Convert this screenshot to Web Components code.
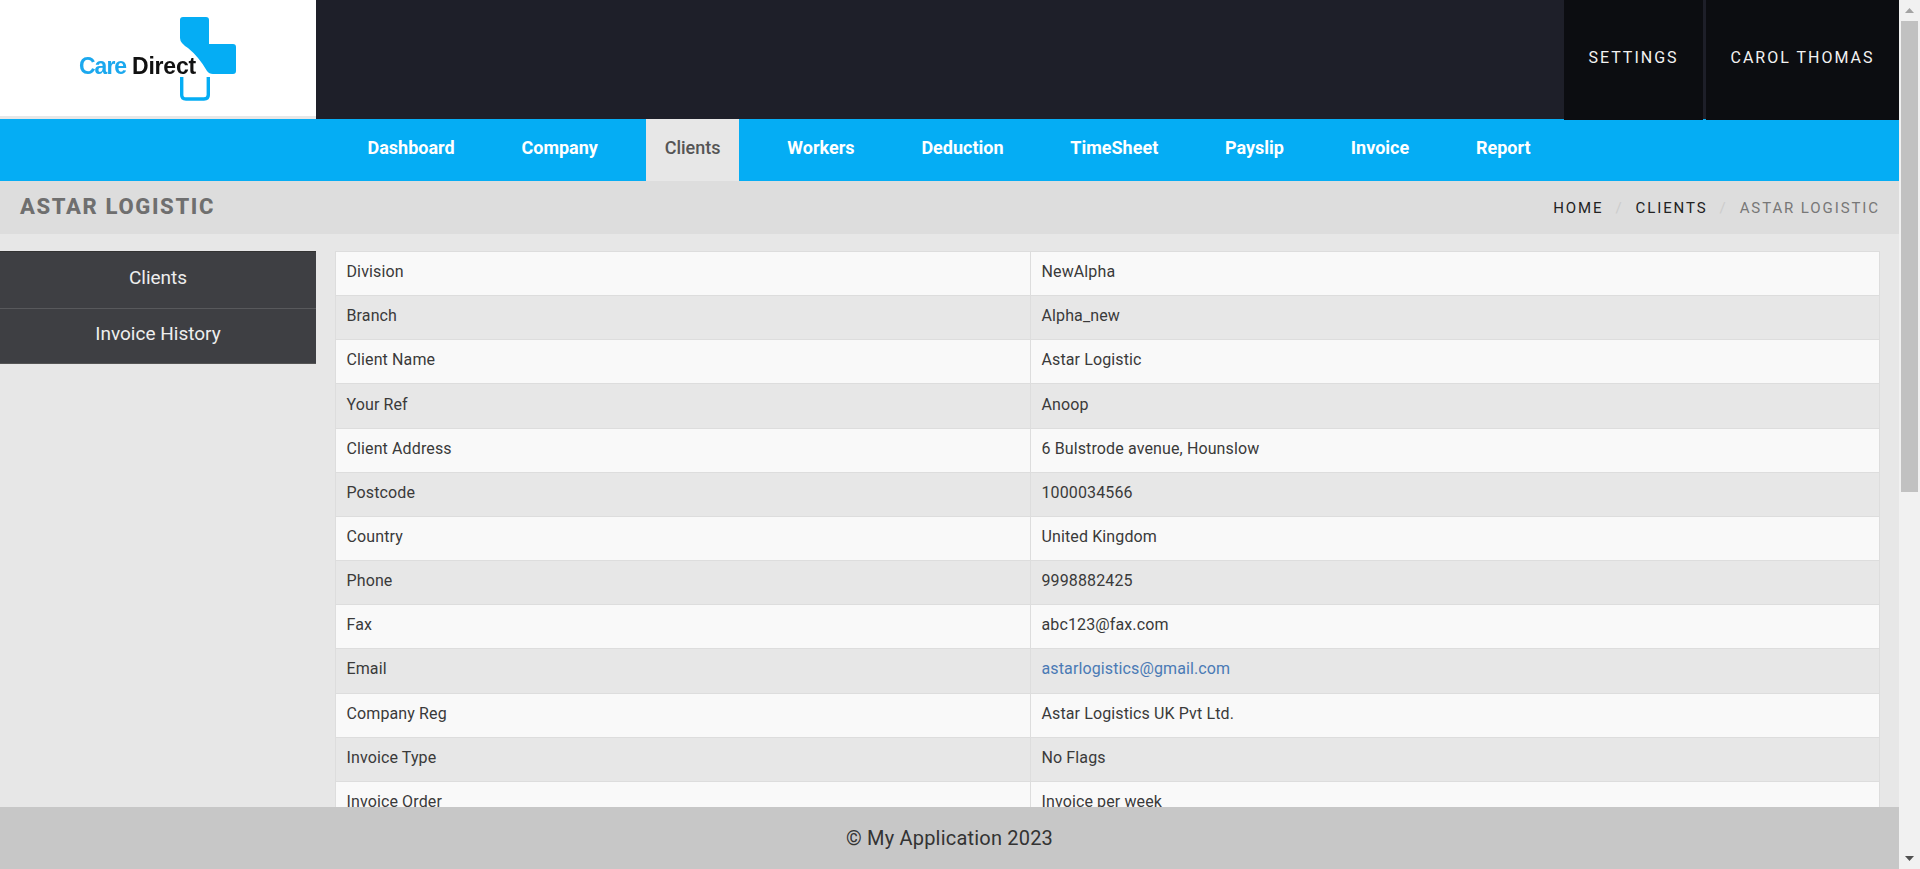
<!DOCTYPE html>
<html><head><meta charset="utf-8">
<style>
html,body{margin:0;height:100%;overflow:hidden}
body{font-family:"Roboto","Liberation Sans",sans-serif;background:#e7e7e7}
app-shell{display:flex;height:869px;width:1920px}
</style></head><body>
<app-shell>
  <top-bar slot="head"></top-bar>
  <main-nav slot="head"></main-nav>
  <page-title slot="head" title="ASTAR LOGISTIC"></page-title>
  <side-menu slot="side"></side-menu>
  <detail-table slot="body"></detail-table>
  <page-footer slot="foot"></page-footer>
</app-shell>
<script>
function def(name,html,init){
  customElements.define(name,class extends HTMLElement{
    constructor(){super();this.attachShadow({mode:'open'}).innerHTML=html;}
    connectedCallback(){init&&init(this)}
  });
}
def('app-shell',`<style>
:host{display:flex;height:869px;width:1920px;overflow:hidden}
.page{width:1899px;height:869px;display:flex;flex-direction:column;overflow:hidden}
.main{flex:1;min-height:0;overflow:hidden;display:flex;gap:19px;padding:17px 19px 0 0;background:#e7e7e7}
.bar{width:21px;background:#f1f1f1;display:flex;flex-direction:column;align-items:center;flex:none}
.up,.down{height:21px;flex:none;display:flex;align-items:center;justify-content:center}
.thumb{width:17px;height:471px;background:#c1c1c1;flex:none}
.gap{flex:1}
</style>
<div class="page"><slot name="head"></slot><div class="main"><slot name="side"></slot><slot name="body"></slot></div><slot name="foot"></slot></div>
<div class="bar"><div class="up"><svg width="9" height="5" viewBox="0 0 9 5"><path d="M4.5 0L9 5H0Z" fill="#a3a3a3"/></svg></div><div class="thumb"></div><div class="gap"></div><div class="down"><svg width="9" height="5" viewBox="0 0 9 5"><path d="M0 0H9L4.5 5Z" fill="#505050"/></svg></div></div>`);

def('top-bar',`<style>
:host{display:flex;height:119px;background:#1e1f29;flex:none;position:relative}
.logo{width:316px;height:116px;background:#fff;border-bottom:3px solid #e7e7e7;flex:none}
svg{display:block;filter:blur(.35px)}
.sp{flex:1}
.acts{display:flex;gap:3px;height:120px}
a{background:#0c0d11;color:#f2f2f2;font-size:16px;letter-spacing:2px;display:flex;align-items:center;justify-content:center;height:120px;box-sizing:border-box;padding-bottom:6px}
.s{width:139px}.c{width:193px}
</style>
<div class="logo"><svg width="316" height="116" viewBox="0 0 316 116">
<path d="M183 17H206Q209 17 209 20V44H233Q236 44 236 47V71Q236 74 233 74H213Q209 74 207 71Q199 57 188 48Q180 43 180 38V20Q180 17 183 17Z" fill="#05adf4"/>
<path d="M181.7 77V95Q181.7 99 186 99H204Q208.3 99 208.3 95V77" fill="none" stroke="#05adf4" stroke-width="3.4"/>
<text x="79" y="74" font-family="Liberation Sans" font-weight="700" font-size="23" letter-spacing="-1" fill="#1ba8ee">Care</text>
<text x="132" y="74" font-family="Liberation Sans" font-weight="700" font-size="23" letter-spacing="-.2" fill="#111">Direct</text>
</svg></div><div class="sp"></div>
<div class="acts"><a class="s">SETTINGS</a><a class="c">CAROL THOMAS</a></div>`);

def('main-nav',`<style>
:host{display:flex;height:62px;background:#05adf4;padding-left:349px;flex:none;font-size:18px;font-weight:700}
a{color:#fff;display:flex;align-items:center;padding:0 18.5px 6px;margin-right:29.8px;height:62px;box-sizing:border-box}
a.on{background:#e7e7e7;color:#555;font-weight:500}
</style>
<a>Dashboard</a><a>Company</a><a class="on">Clients</a><a>Workers</a><a>Deduction</a><a>TimeSheet</a><a>Payslip</a><a>Invoice</a><a>Report</a>`);

def('page-title',`<style>
:host{display:flex;height:53px;background:#ddd;align-items:center;justify-content:space-between;padding:0 19px 0 20px;flex:none}
h1{margin:0 0 2px;font-size:22px;font-weight:800;letter-spacing:1.65px;color:#6f6f6f}
nav{font-size:15px;letter-spacing:1.9px;display:flex;gap:12px;padding-top:1px}
.l{color:#222}.m{color:#ccc}.cur{color:#777}
</style>
<h1>ASTAR LOGISTIC</h1><nav><span class="l">HOME</span><span class="m">/</span><span class="l">CLIENTS</span><span class="m">/</span><span class="cur">ASTAR LOGISTIC</span></nav>`);

def('side-menu',`<style>
:host{display:block;width:316px;flex:none;align-self:flex-start;background:#3e3f43;color:#eee;font-size:19px;border-top:1px solid #333;border-bottom:1px solid #555}
a{display:flex;height:55.5px;align-items:center;justify-content:center;box-sizing:border-box;padding-bottom:4px}
a+a{border-top:1px solid #58595c}
</style><a>Clients</a><a>Invoice History</a>`);

const rows=[['Division','NewAlpha'],['Branch','Alpha_new'],['Client Name','Astar Logistic'],['Your Ref','Anoop'],['Client Address','6 Bulstrode avenue, Hounslow'],['Postcode','1000034566'],['Country','United Kingdom'],['Phone','9998882425'],['Fax','abc123@fax.com'],['Email','<a>astarlogistics@gmail.com</a>'],['Company Reg','Astar Logistics UK Pvt Ltd.'],['Invoice Type','No Flags'],['Invoice Order','Invoice per week']];
def('detail-table',`<style>
:host{display:block;flex:1;min-width:0}
table{border-collapse:collapse;width:100%;table-layout:fixed;font-size:16px;letter-spacing:.12px;color:#3a3a3a}
td{border:1px solid #ddd;height:44.17px;padding:0 10px 4px 10.5px;box-sizing:border-box;vertical-align:middle;background:#f9f9f9}
tr:nth-child(even) td{background:#e7e7e7}
td:first-child{width:695px}
a{color:#4a7ab5}
</style><table><tbody>${rows.map(r=>`<tr><td>${r[0]}</td><td>${r[1]}</td></tr>`).join('')}</tbody></table>`);

def('page-footer',`<style>
:host{display:flex;height:62px;background:#c7c7c7;color:#333;font-size:20px;letter-spacing:.2px;align-items:center;justify-content:center;flex:none}
</style>© My Application 2023`);
</script>
</body></html>
